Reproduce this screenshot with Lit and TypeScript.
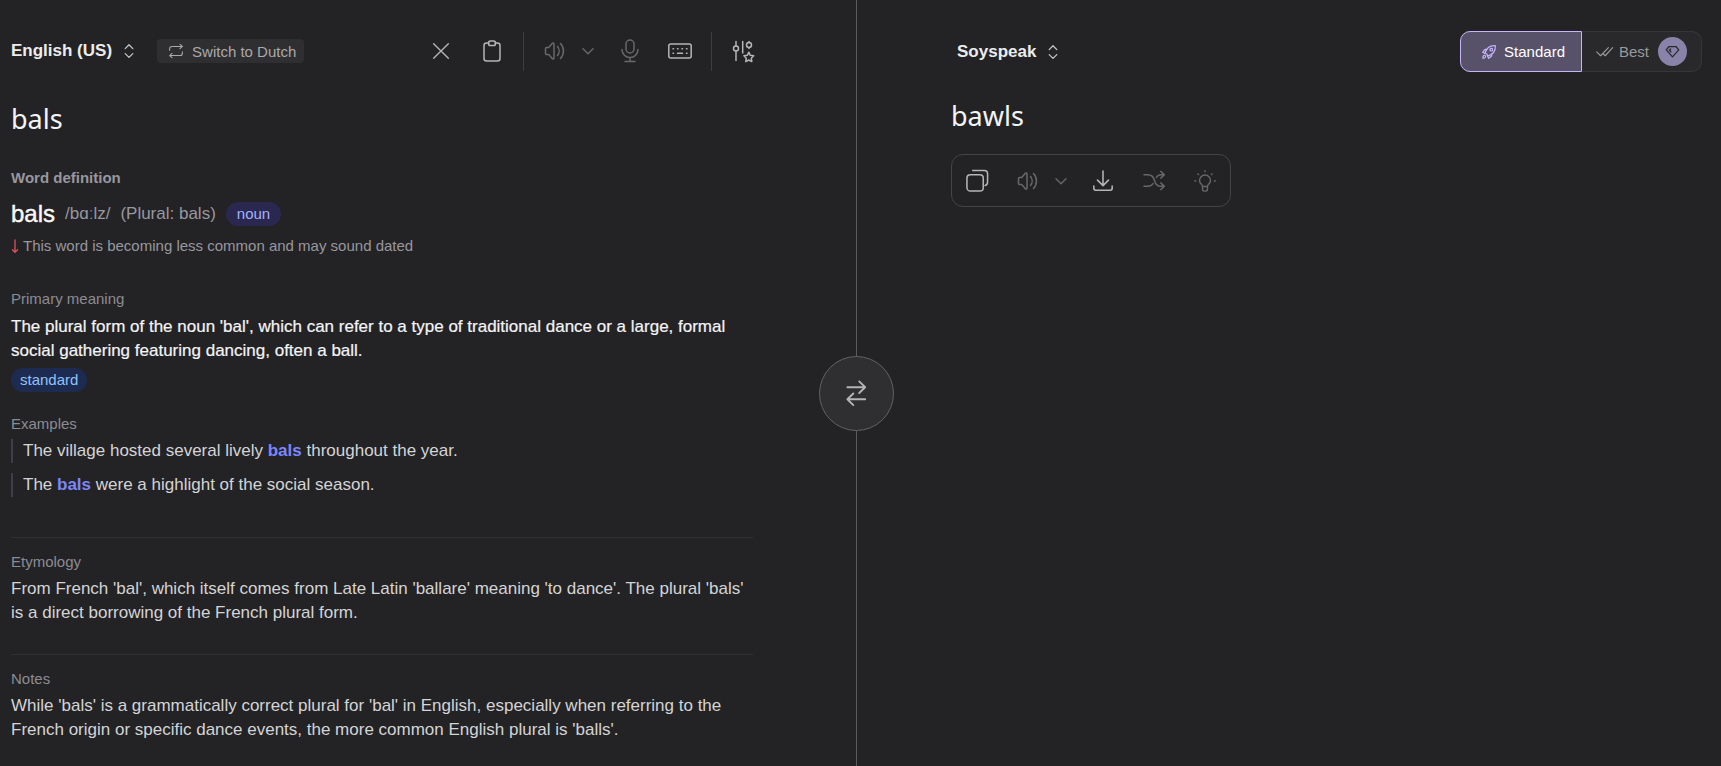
import { LitElement, html, css, svg, nothing, type TemplateResult } from "lit";
import { customElement, property } from "lit/decorators.js";

const ICONS: Record<string, TemplateResult> = {
  updown: svg`<path d="M8.2 9.6 12 5.8l3.8 3.8M8.2 14.6l3.8 3.8 3.8-3.8"/>`,
  repeat: svg`<path d="M18 2l3.500 3.200L18 8.500M2.500 11V8.200a3 3 0 0 1 3-3h16M6 22l-3.500-3.200L6 15.500M21.500 13v2.800a3 3 0 0 1-3 3h-16"/>`,
  close: svg`<path d="M4 4l16 16M20 4 4 20"/>`,
  clipboard: svg`<path d="M9 4H6.500A2.500 2.500 0 0 0 4 6.500v13A2.500 2.500 0 0 0 6.500 22h11a2.500 2.500 0 0 0 2.500-2.500v-13A2.500 2.500 0 0 0 17.500 4H15"/><rect x="8.500" y="2" width="7" height="4.500" rx="1.800"/>`,
  speaker: svg`<path d="M2.500 9.500v5a1 1 0 0 0 1 1h2.200l3.700 4.200c.7.700 1.600.3 1.600-.7V5c0-1-.9-1.400-1.600-.7L5.700 8.500H3.500a1 1 0 0 0-1 1zM14.500 7.500a7 7 0 0 1 0 9M17.500 4.500a11 11 0 0 1 0 15"/>`,
  chevron: svg`<path d="M6.500 9.500l5.500 5.500 5.500-5.500"/>`,
  mic: svg`<rect x="8" y="1" width="8" height="13" rx="4"/><path d="M4 10.500a8 8 0 0 0 16 0M12 18.500V22.500M7 22.500h10"/>`,
  keyboard: svg`<rect x="0.800" y="5" width="22.400" height="14" rx="2"/><path d="M5 9.700h.5M9.500 9.700h.5M14 9.700h.5M18.500 9.700h.5M5 14.300h.5M9.500 14.300h5M18.500 14.300h.5"/>`,
  sliders: svg`<path d="M5 2.500V7M5 12v9.500M11.700 2.500V14M18 2.500v1M18 8.500v1"/><circle cx="5" cy="9.500" r="2.500"/><circle cx="18" cy="6" r="2.500"/><path d="M17.800 13.200l1.500 3.100 3.400.5-2.400 2.400.5 3.400-3-1.600-3 1.600.5-3.400-2.400-2.400 3.400-.5z"/>`,
  swap: svg`<path d="M2.500 7.500h18.500M14.800 1.500l6.200 6-6.200 6M21 20H2.500M8.700 14l-6.200 6 6.200 6"/>`,
  copy: svg`<rect x="1" y="6" width="17" height="17" rx="3.500"/><path d="M7 1.500h12A3.500 3.500 0 0 1 22.500 5v8.500c0 2-1 3.300-2.500 3.800"/>`,
  download: svg`<path d="M12 1v15.500M6 11l6 6 6-6M2 17.500V20a2 2 0 0 0 2 2h16a2 2 0 0 0 2-2v-2.500"/>`,
  shuffle: svg`<path d="M1 6h4c4 0 6 2 7 6s3.500 6 6.500 6H22M1 18h4c2.500 0 4.300-1 5.500-2.800M14 8.800c1.200-2 3-2.800 5-2.800H22M18.500 2.500 22.300 6 18.500 9.500M18.500 14.500l3.800 3.500-3.800 3.500"/>`,
  bulb: svg`<path d="M9.300 18c0-2.500-3.300-3-3.300-6.500a6 6 0 0 1 12 0c0 3.500-3.300 4-3.300 6.500M9.300 18h5.400v3a2 2 0 0 1-2 2h-1.400a2 2 0 0 1-2-2zM12 .8v1M4.300 4.300l.7.700M19.700 4.300l-.7.700M.8 12h1M22.200 12h1"/>`,
  rocket: svg`<path d="M9 15 5.800 14.200C7.500 8 12.500 2 21.500 2.500 22 11.500 16 16.500 9.800 18.200zM9.500 8H6L2.500 12.500l3.300 1.700M16 14.500V18l-4.500 3.500-1.700-3.300M3 21.500c-.4-2.300 0-4 1.500-4.500s2.700.8 2.300 2.200C6.400 20.700 5 21.300 3 21.500z"/><circle cx="15.500" cy="8.500" r="2"/>`,
  checks: svg`<path d="M1 12.500 6.500 18 17.500 6.500M10.500 15.500 13 18 23.500 6.500"/>`,
  gem: svg`<path d="M6.500 4h11L22 9.500 12 20.500 2 9.500zM9 8l-2 2 2.500 2.500"/>`,
  down: svg`<path d="M7 1v12M4.500 10.800 7 13.400l2.500-2.600"/>`,
};

@customElement("ui-icon")
export class UiIcon extends LitElement {
  static styles = css`
    :host { display: inline-flex; flex: none; }
    svg { display: block; fill: none; stroke: currentColor; stroke-linecap: round; stroke-linejoin: round; overflow: visible; }
  `;
  @property() name = "";
  @property({ type: Number }) size = 24;
  @property({ type: Number }) weight = 1.5;
  @property() box = "0 0 24 24";
  render() {
    return html`<svg aria-hidden="true" width=${this.size} height=${this.size} viewBox=${this.box}
      stroke-width=${this.weight}>${ICONS[this.name] ?? nothing}</svg>`;
  }
}

const shared = css`
  * { box-sizing: border-box; }
  button, input {
    font: inherit; color: inherit; background: none; border: 0; margin: 0; padding: 0;
  }
  button { display: inline-flex; align-items: center; justify-content: center; cursor: pointer; }
  button:disabled { cursor: default; }
  .language { gap: 7px; font-size: 17px; font-weight: 700; line-height: 24px; color: #ececed; white-space: nowrap; }
  .language ui-icon { color: #c4c4c6; }
  .tool { width: 36px; height: 36px; color: #b5b5b7; }
  .tool:disabled { color: #68686a; }
  .tool.narrow { width: 30px; }
`;

@customElement("word-definition")
export class WordDefinition extends LitElement {
  static styles = css`
    * { box-sizing: border-box; }
    :host { display: block; color: #d4d4d6; font-size: 17px; line-height: 24px; }
    h2, h3, p, ul { margin: 0; padding: 0; }
    h2, h3 { font-size: 15px; line-height: 20px; color: #98979f; }
    h3 { font-weight: 400; color: #8c8b93; margin-bottom: 5px; }
    .entry { display: flex; align-items: center; gap: 10px; height: 28px; margin-top: 12px; color: #98979f; }
    .headword { font-size: 24px; line-height: 28px; font-weight: 400; color: #fafafa; -webkit-text-stroke: 0.4px currentColor; }
    .pill { display: inline-block; border-radius: 12px; font-size: 15px; line-height: 24px; }
    .noun { padding: 0 11px; background: #2a2850; color: #a3b0fb; }
    .register { padding: 0 9px; background: #1e2b50; color: #8fc3fb; }
    .usage { display: flex; align-items: center; margin-top: 8px; font-size: 15px; line-height: 20px; color: #98979f; }
    .usage ui-icon { justify-content: center; width: 7px; margin-right: 5px; color: #e0525a; }
    .meaning { margin-top: 33px; }
    .meaning h3 { margin-bottom: 6px; }
    .lead { color: #f4f4f5; -webkit-text-stroke: 0.2px currentColor; margin-bottom: 5px; }
    .meaning .pill { display: table; }
    .examples { margin-top: 22px; }
    .examples ul { list-style: none; display: grid; gap: 10px; }
    .examples li { border-left: 2px solid #3f3f46; padding-left: 10px; }
    .examples b { color: #7d86f8; }
    .extra { border-top: 1px solid #303033; padding-top: 14px; margin-top: 29px; }
    .examples + .extra { margin-top: 40px; }
  `;
  render() {
    return html`
      <h2>Word definition</h2>
      <div class="entry">
        <span class="headword">bals</span>
        <span>/bɑːlz/</span>
        <span>(Plural: bals)</span>
        <span class="pill noun">noun</span>
      </div>
      <p class="usage">
        <ui-icon name="down" .size=${14} .weight=${1.3} box="0 0 14 14"></ui-icon>
        <span>This word is becoming less common and may sound dated</span>
      </p>
      <section class="meaning">
        <h3>Primary meaning</h3>
        <p class="lead">The plural form of the noun 'bal', which can refer to a type of traditional dance or a large, formal social gathering featuring dancing, often a ball.</p>
        <span class="pill register">standard</span>
      </section>
      <section class="examples">
        <h3>Examples</h3>
        <ul>
          <li>The village hosted several lively <b>bals</b> throughout the year.</li>
          <li>The <b>bals</b> were a highlight of the social season.</li>
        </ul>
      </section>
      <section class="extra">
        <h3>Etymology</h3>
        <p>From French 'bal', which itself comes from Late Latin 'ballare' meaning 'to dance'. The plural 'bals' is a direct borrowing of the French plural form.</p>
      </section>
      <section class="extra">
        <h3>Notes</h3>
        <p>While 'bals' is a grammatically correct plural for 'bal' in English, especially when referring to the French origin or specific dance events, the more common English plural is 'balls'.</p>
      </section>
    `;
  }
}

@customElement("source-pane")
export class SourcePane extends LitElement {
  static styles = [shared, css`
    :host { display: block; padding: 31px 12% 20px 11px; }
    .bar { display: flex; align-items: center; height: 40px; margin-right: -21px; }
    .switch { margin-left: 18px; padding: 0 8px 0 11px; gap: 8px; height: 24px; border-radius: 4px; background: #2f2f31; color: #a9a9ab; font-size: 15px; white-space: nowrap; }
    .tools { display: flex; align-items: center; margin-left: auto; }
    .group { display: flex; align-items: center; gap: 14px; height: 39px; padding: 0 13px; border-left: 1px solid #3d3d40; }
    .group:first-child { border-left: 0; gap: 15px; }
    .audio { display: flex; align-items: center; margin-right: -5px; }
    .source { display: block; width: 100%; height: 40px; margin: 28px 0 29px; font-family: "Noto Sans", "Open Sans", sans-serif; font-size: 27px; line-height: 40px; color: #f4f4f5; outline: none; }
  `];
  render() {
    return html`
      <div class="bar">
        <button class="language">English (US)<ui-icon name="updown" .size=${20} box="2 2 20 20" .weight=${1.3}></ui-icon></button>
        <button class="switch"><ui-icon name="repeat" .size=${16} .weight=${1.6}></ui-icon>Switch to Dutch</button>
        <div class="tools">
          <div class="group">
            <button class="tool" aria-label="Clear text"><ui-icon name="close" .size=${22}></ui-icon></button>
            <button class="tool" aria-label="Paste"><ui-icon name="clipboard"></ui-icon></button>
          </div>
          <div class="group">
            <div class="audio">
              <button class="tool" disabled aria-label="Listen"><ui-icon name="speaker"></ui-icon></button>
              <button class="tool narrow" disabled aria-label="Voice options"><ui-icon name="chevron" .size=${22}></ui-icon></button>
            </div>
            <button class="tool" disabled aria-label="Dictate"><ui-icon name="mic"></ui-icon></button>
            <button class="tool" aria-label="Keyboard"><ui-icon name="keyboard"></ui-icon></button>
          </div>
          <div class="group">
            <button class="tool" aria-label="Translation options"><ui-icon name="sliders"></ui-icon></button>
          </div>
        </div>
      </div>
      <input class="source" aria-label="Source text" value="bals" />
      <word-definition></word-definition>
    `;
  }
}

@customElement("result-pane")
export class ResultPane extends LitElement {
  static styles = [shared, css`
    :host { display: block; padding: 31px 19px 20px 94px; }
    .bar { display: flex; align-items: center; justify-content: space-between; padding-left: 6px; height: 41px; }
    .modes { display: flex; align-items: stretch; height: 41px; font-size: 15px; }
    .mode { gap: 7px; border: 1px solid #363638; background: #29292b; color: #99999b; }
    .mode.active { padding: 0 16px 0 20px; border-color: #c6b5fb; border-radius: 10px 0 0 10px; background: #57526a; color: #fff; }
    .mode.active ui-icon { color: #c6b5fb; }
    .mode.best { padding: 0 14px; gap: 6px; border-left: 0; border-radius: 0 10px 10px 0; }
    .gem { display: inline-flex; align-items: center; justify-content: center; width: 29px; height: 29px; margin-left: 3px; border-radius: 50%; background: #8982a9; color: #29292b; }
    .result { margin: 24px 0 18px; font-family: "Noto Sans", "Open Sans", sans-serif; font-size: 27px; line-height: 40px; color: #f4f4f5; }
    .tools { display: inline-flex; align-items: center; gap: 15px; height: 53px; padding: 0 7px; border: 1px solid #444447; border-radius: 12px; }
    .audio { display: flex; align-items: center; margin-right: -6px; }
  `];
  render() {
    return html`
      <div class="bar">
        <button class="language">Soyspeak<ui-icon name="updown" .size=${20} box="2 2 20 20" .weight=${1.3}></ui-icon></button>
        <div class="modes" role="group" aria-label="Translation quality">
          <button class="mode active" aria-pressed="true"><ui-icon name="rocket" .size=${16} .weight=${1.8}></ui-icon>Standard</button>
          <button class="mode best" aria-pressed="false"><ui-icon name="checks" .size=${17} .weight=${1.6}></ui-icon>Best<span class="gem"><ui-icon name="gem" .size=${15} .weight=${2}></ui-icon></span></button>
        </div>
      </div>
      <p class="result">bawls</p>
      <div class="tools">
        <button class="tool" aria-label="Copy"><ui-icon name="copy" .size=${23} .weight=${1.6}></ui-icon></button>
        <div class="audio">
          <button class="tool" disabled aria-label="Listen"><ui-icon name="speaker"></ui-icon></button>
          <button class="tool narrow" disabled aria-label="Voice options"><ui-icon name="chevron" .size=${22}></ui-icon></button>
        </div>
        <button class="tool" aria-label="Download"><ui-icon name="download" .size=${22} .weight=${1.7}></ui-icon></button>
        <button class="tool" disabled aria-label="Alternatives"><ui-icon name="shuffle" .size=${23}></ui-icon></button>
        <button class="tool" disabled aria-label="Explain"><ui-icon name="bulb" .size=${22}></ui-icon></button>
      </div>
    `;
  }
}

@customElement("app-root")
export class AppRoot extends LitElement {
  static styles = [shared, css`
    :host {
      display: grid; grid-template-columns: minmax(0, 856fr) 1px minmax(0, 864fr);
      min-height: 100vh; background: #232325; color: #d4d4d6;
      font-family: "Liberation Sans", Arial, sans-serif;
    }
    .divider { display: flex; align-items: center; justify-content: center; padding-top: 20px; background: #5a5a5d; z-index: 1; }
    .swap { flex: none; width: 75px; height: 75px; border: 1px solid #626265; border-radius: 50%; background: #2f2f31; color: #b5b5b7; }
  `];
  render() {
    return html`
      <source-pane></source-pane>
      <div class="divider">
        <button class="swap" aria-label="Swap languages"><ui-icon name="swap" .size=${26} box="-1 0 27 27" .weight=${1.9}></ui-icon></button>
      </div>
      <result-pane></result-pane>
    `;
  }
}
